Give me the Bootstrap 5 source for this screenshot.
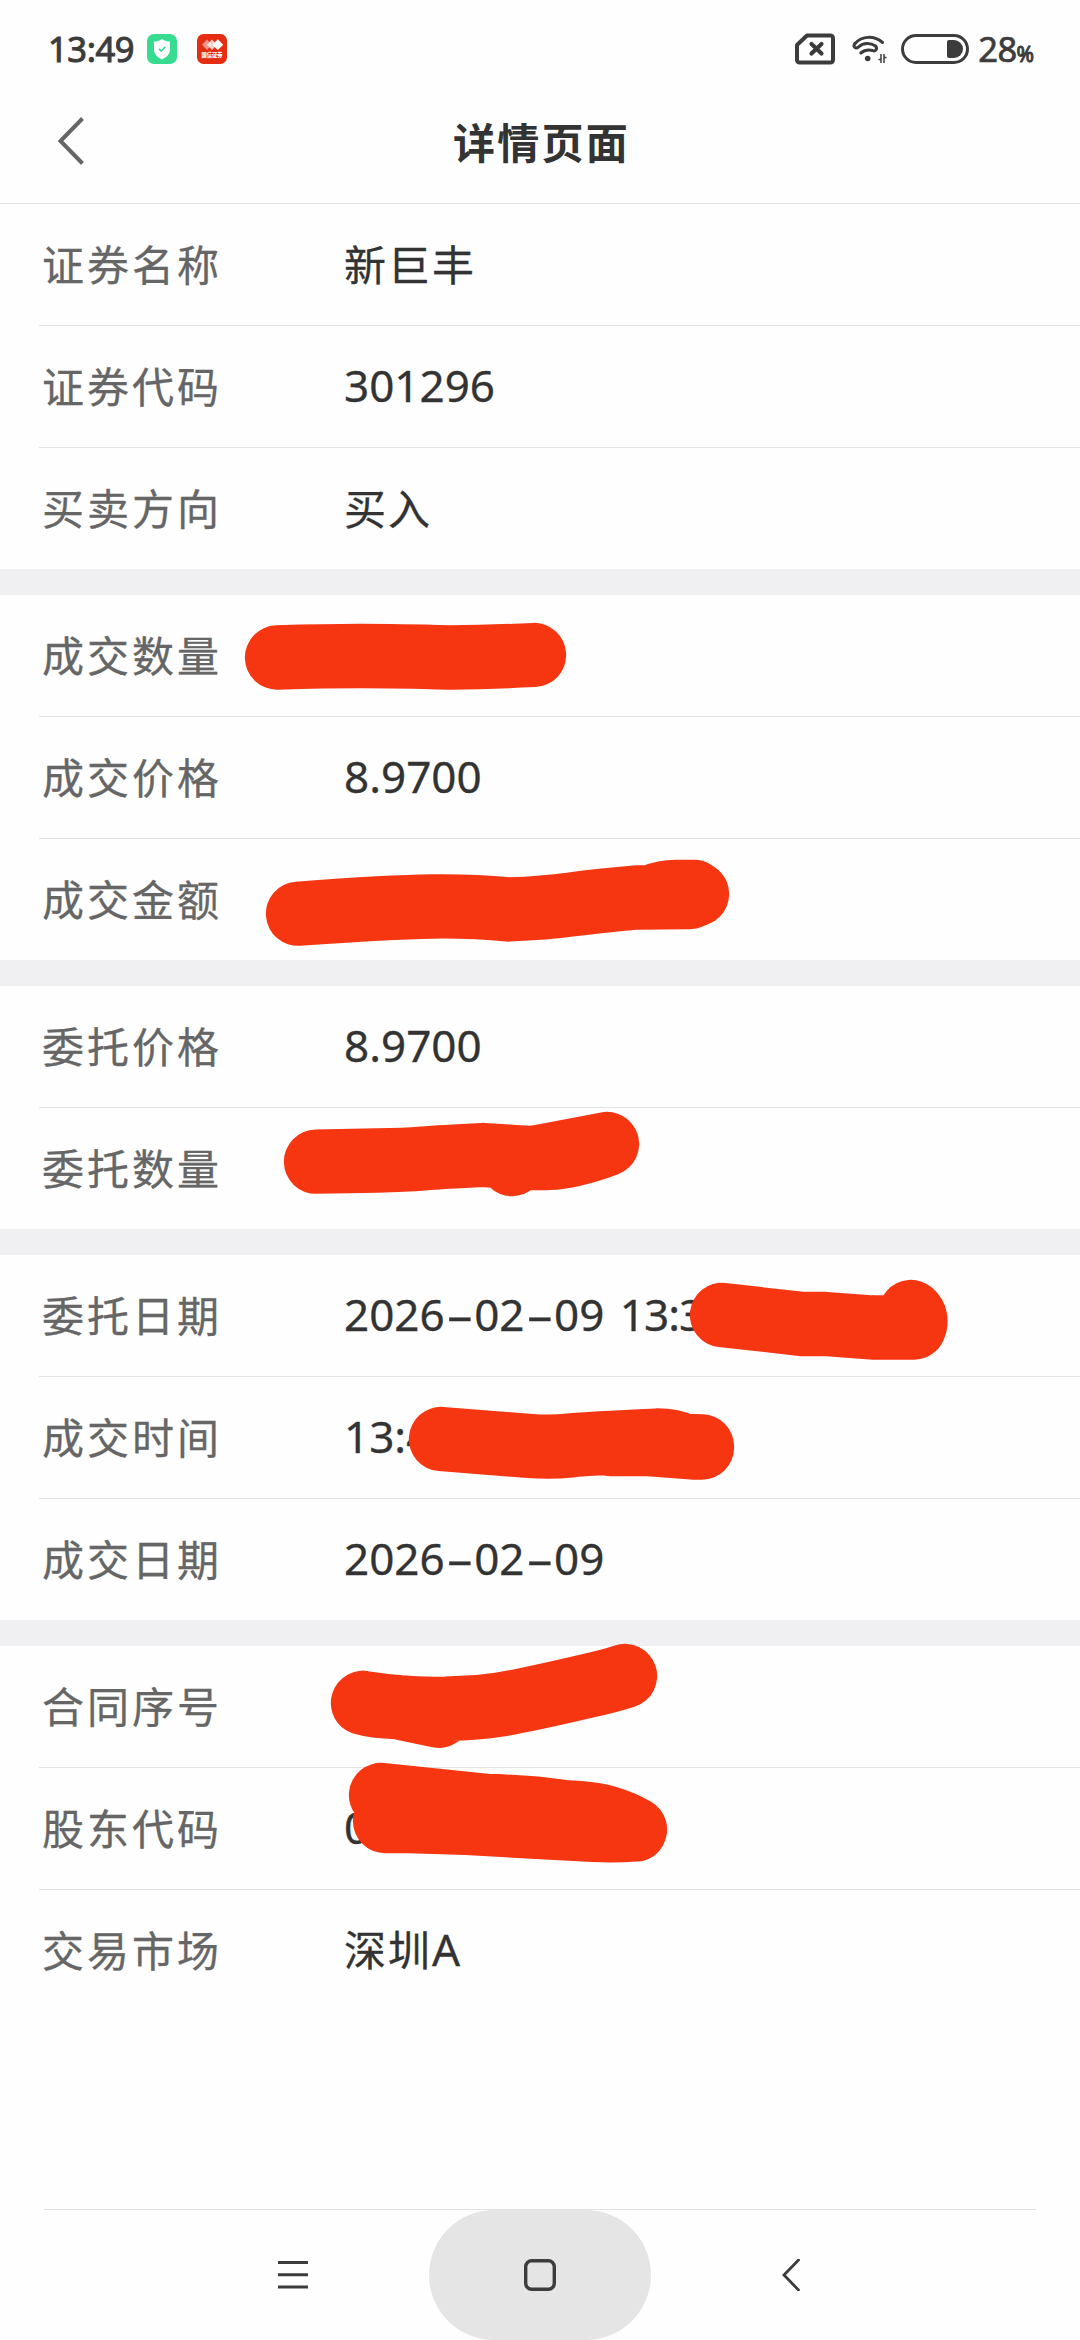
<!DOCTYPE html>
<html lang="zh-CN">
<head>
<meta charset="utf-8">
<meta name="viewport" content="width=device-width, initial-scale=1">
<title>详情页面</title>
<link rel="stylesheet" href="https://cdn.jsdelivr.net/npm/bootstrap@5.3.0/dist/css/bootstrap.min.css">
<style>
body{background:#fefefe;color:#333;font-family:"Noto Sans","Noto Sans CJK SC",sans-serif}
.screen{width:1080px;height:2340px;overflow:hidden}
svg{display:block;flex:none}
.statusbar{height:98px;padding:0 46px 0 48px;color:#3c3c3c}
.clock{font-size:34.5px;line-height:1;letter-spacing:-.4px;-webkit-text-stroke:1px #3c3c3c;width:99px}
.level{font-size:34.5px;line-height:1;letter-spacing:-.6px;-webkit-text-stroke:.7px #3c3c3c}
.level span{font-size:21px;letter-spacing:0;-webkit-text-stroke:1px #3c3c3c}
.titlebar{height:106px;padding:0 57px 19px;border-bottom:1px solid #e2e2e3}
.titlebar h1{font-family:"Noto Sans CJK SC",sans-serif;font-size:42px;letter-spacing:2.3px;line-height:1;font-weight:700;color:#333;padding-left:3px}
.side{width:28px}
.sect+.sect{border-top:26px solid #f0f0f3}
.item{height:122px;margin-left:39px;padding-bottom:4px;border-bottom:1px solid #e2e2e3}
.item:last-child{height:121px;border-bottom:0}
.key{width:305px;padding-left:3px;color:#666;font-size:42px;letter-spacing:3px;font-family:"Noto Sans CJK SC",sans-serif;line-height:60px;-webkit-text-stroke:.3px #666}
.val{font-size:44px;line-height:60px;white-space:pre;-webkit-text-stroke:.3px #333}
.zh{font-size:42px;letter-spacing:2px;font-family:"Noto Sans CJK SC",sans-serif}
.latin{font-family:"Noto Sans",sans-serif;font-size:44px}
.dash{display:inline-block;transform:scaleX(1.95);width:29.5px;text-align:center}
.time{letter-spacing:-1px;margin-left:4px}
.ink{position:absolute;left:-39px;top:0;overflow:visible;fill:none;stroke:#f63511;stroke-width:64.3;stroke-linecap:round;stroke-linejoin:round}
.navkeys{height:131px;margin:0 44px;border-top:1px solid #e2e2e3}
.navkeys .pill{width:222px;height:130px;border-radius:65px;background:#e5e5e5}
</style>
<script src="https://cdn.jsdelivr.net/npm/bootstrap@5.3.0/dist/js/bootstrap.bundle.min.js"></script>
</head>
<body>
<div class="screen d-flex flex-column">
  <div class="statusbar d-flex align-items-center">
    <span class="clock">13:49</span>
    <svg width="30" height="30" viewBox="0 0 30 30"><rect width="30" height="30" rx="7" fill="#37dc91"/><path d="M15 5c2.500 1.800 5 2.500 8 2.600v7.400c0 5-3 8-8 10.500-5-2.500-8-5.500-8-10.500V7.600C10 7.500 12.500 6.800 15 5z" fill="#fff"/><path d="M12 14.800l2.300 2.200 4-4.200" fill="none" stroke="#37dc91" stroke-width="1.600"/></svg>
    <svg style="margin-left:20px" width="30" height="30" viewBox="0 0 30 30"><rect width="30" height="30" rx="6.500" fill="#e52d14"/><g fill="#fff"><path d="M10 5.500l5 5.200-5 5.200-5-5.200z" opacity=".5"/><path d="M15 5.500l5 5.200-5 5.200-5-5.200z" opacity=".75"/><path d="M20.800 5.300l5.400 5.400-5.400 5.400-5.400-5.400z"/></g><text x="15" y="23.300" font-size="5.300" font-weight="900" fill="#fff" text-anchor="middle" font-family="Noto Sans CJK SC, sans-serif">国信证券</text></svg>
    <div class="ms-auto d-flex align-items-center">
      <svg width="40" height="32" viewBox="0 0 40 32"><path d="M12 2.500h23.500a2.500 2.500 0 0 1 2.500 2.500v22a2.500 2.500 0 0 1-2.500 2.500h-31A2.500 2.500 0 0 1 2 27V12z" fill="none" stroke="#3c3c3c" stroke-width="4" stroke-linejoin="round"/><path d="M16.500 11l10 9.500M26.500 11l-10 9.500" stroke="#3c3c3c" stroke-width="4.200" stroke-linecap="round"/></svg>
      <svg style="margin-left:17px" width="35" height="30" viewBox="0 0 35 30"><g fill="none" stroke="#3c3c3c" stroke-width="3" stroke-linecap="round"><path d="M3 9.500C10 1.800 22 1.200 30.500 8.500"/><path d="M3 9.500c-2.500 3 .5 6 3.500 3.500 5-4.500 12-4.300 17-1"/><path d="M23.500 12c2.500 2.500 0 6-3 4.500M8.800 19c4-3.300 8-3.400 11.700-2.500"/></g><circle cx="15.700" cy="24.500" r="2.800" fill="#3c3c3c"/><path d="M29 20v9M32 20v9M26.500 25.500h2.500M32 23.500h2.500" stroke="#3c3c3c" stroke-width="1.500"/></svg>
      <svg style="margin-left:14px" width="68" height="30" viewBox="0 0 68 30"><rect x="1.500" y="1.500" width="65" height="27" rx="13.500" fill="none" stroke="#3c3c3c" stroke-width="3"/><path d="M48 6h5a9 9 0 0 1 0 18h-5a2 2 0 0 1-2-2V8a2 2 0 0 1 2-2z" fill="#3c3c3c"/></svg>
      <div class="level" style="margin-left:9px">28<span>%</span></div>
    </div>
  </div>
  <header class="titlebar d-flex align-items-center justify-content-between">
    <svg class="side" width="28" height="48" viewBox="0 0 28 48"><path d="M25.500 1.500L3.500 24 25.500 46.500" fill="none" stroke="#666" stroke-width="4"/></svg>
    <h1 class="mb-0">详情页面</h1>
    <span class="side"></span>
  </header>
  <main>
    <section class="sect">
      <div class="item d-flex align-items-center"><span class="key">证券名称</span><span class="val zh">新巨丰</span></div>
      <div class="item d-flex align-items-center"><span class="key">证券代码</span><span class="val">301296</span></div>
      <div class="item d-flex align-items-center"><span class="key">买卖方向</span><span class="val zh">买入</span></div>
    </section>
    <section class="sect">
      <div class="item d-flex align-items-center position-relative"><span class="key">成交数量</span>
        <svg class="ink" width="1080" height="122" viewBox="0 595 1080 122"><path d="M277 657.500Q325 656 361 656T450 657.500Q490 657 534 655"/></svg></div>
      <div class="item d-flex align-items-center"><span class="key">成交价格</span><span class="val">8.9700</span></div>
      <div class="item d-flex align-items-center position-relative"><span class="key">成交金额</span>
        <svg class="ink" width="1080" height="122" viewBox="0 839 1080 122"><path d="M298 913.700Q390 907 432 906.500T509 909.500Q545 908 571 904.500T636 897.500L690 897L697 894L694 892H676Q664 892 655 896"/></svg></div>
    </section>
    <section class="sect">
      <div class="item d-flex align-items-center"><span class="key">委托价格</span><span class="val">8.9700</span></div>
      <div class="item d-flex align-items-center position-relative"><span class="key">委托数量</span>
        <svg class="ink" width="1080" height="122" viewBox="0 1108 1080 122"><path d="M316 1161.700L377 1160.500Q405 1160 423 1158.500T483 1155Q505 1156.500 533 1158H548Q572 1157 607 1144L533 1158M512 1164H512.100"/></svg></div>
    </section>
    <section class="sect">
      <div class="item d-flex align-items-center position-relative"><span class="key">委托日期</span><span class="val">2026<span class="dash">-</span>02<span class="dash">-</span>09 <span class="time">13:3</span></span>
        <svg class="ink" width="1080" height="122" viewBox="0 1255 1080 122"><path d="M722 1315Q765 1320 802 1324H825L872 1327.500H914Q918 1318 911 1312"/></svg></div>
      <div class="item d-flex align-items-center position-relative"><span class="key">成交时间</span><span class="val">13:4</span>
        <svg class="ink" width="1080" height="122" viewBox="0 1377 1080 122"><path d="M441 1439L530 1446Q551 1447.500 570 1445.500T657 1440.500Q672 1440.500 684 1446L702 1446.500V1447.500H693L646 1444H610"/></svg></div>
      <div class="item d-flex align-items-center"><span class="key">成交日期</span><span class="val">2026<span class="dash">-</span>02<span class="dash">-</span>09</span></div>
    </section>
    <section class="sect">
      <div class="item d-flex align-items-center position-relative"><span class="key">合同序号</span>
        <svg class="ink" width="1080" height="122" viewBox="0 1646 1080 122"><path d="M363 1703Q375 1706.500 397 1707L439 1715.700L450 1708.500Q475 1708.500 500 1704.500T587 1686Q610 1681 625 1676M363 1703Q400 1708.500 433 1708.800H450"/></svg></div>
      <div class="item d-flex align-items-center position-relative"><span class="key">股东代码</span><span class="val">0</span>
        <svg class="ink" width="1080" height="122" viewBox="0 1768 1080 122"><path fill="#f63511" d="M381 1795L487 1806Q530 1807 563 1812L580 1813Q610 1815 635 1829.500Q615 1831 593 1830L467 1823L410 1821H385"/></svg></div>
      <div class="item d-flex align-items-center"><span class="key">交易市场</span><span class="val zh">深圳<span class="latin">A</span></span></div>
    </section>
  </main>
  <nav class="navkeys mt-auto d-flex align-items-center justify-content-between">
    <svg style="margin-left:234px" width="30" height="30" viewBox="0 0 30 30"><path d="M0 2.500h30M0 14.800h30M0 27h30" stroke="#3c3c3c" stroke-width="3"/></svg>
    <div class="pill d-flex align-items-center justify-content-center"><svg width="32" height="32" viewBox="0 0 32 32"><rect x="1.700" y="1.700" width="28.600" height="28.600" rx="6" fill="none" stroke="#3c3c3c" stroke-width="3.400"/></svg></div>
    <svg style="margin-right:236px" width="28" height="32" viewBox="-10 0 28 32"><path d="M16.500 1L2 16l14.500 15" fill="none" stroke="#3c3c3c" stroke-width="2.800" stroke-linecap="round"/></svg>
  </nav>
</div>
</body>
</html>
